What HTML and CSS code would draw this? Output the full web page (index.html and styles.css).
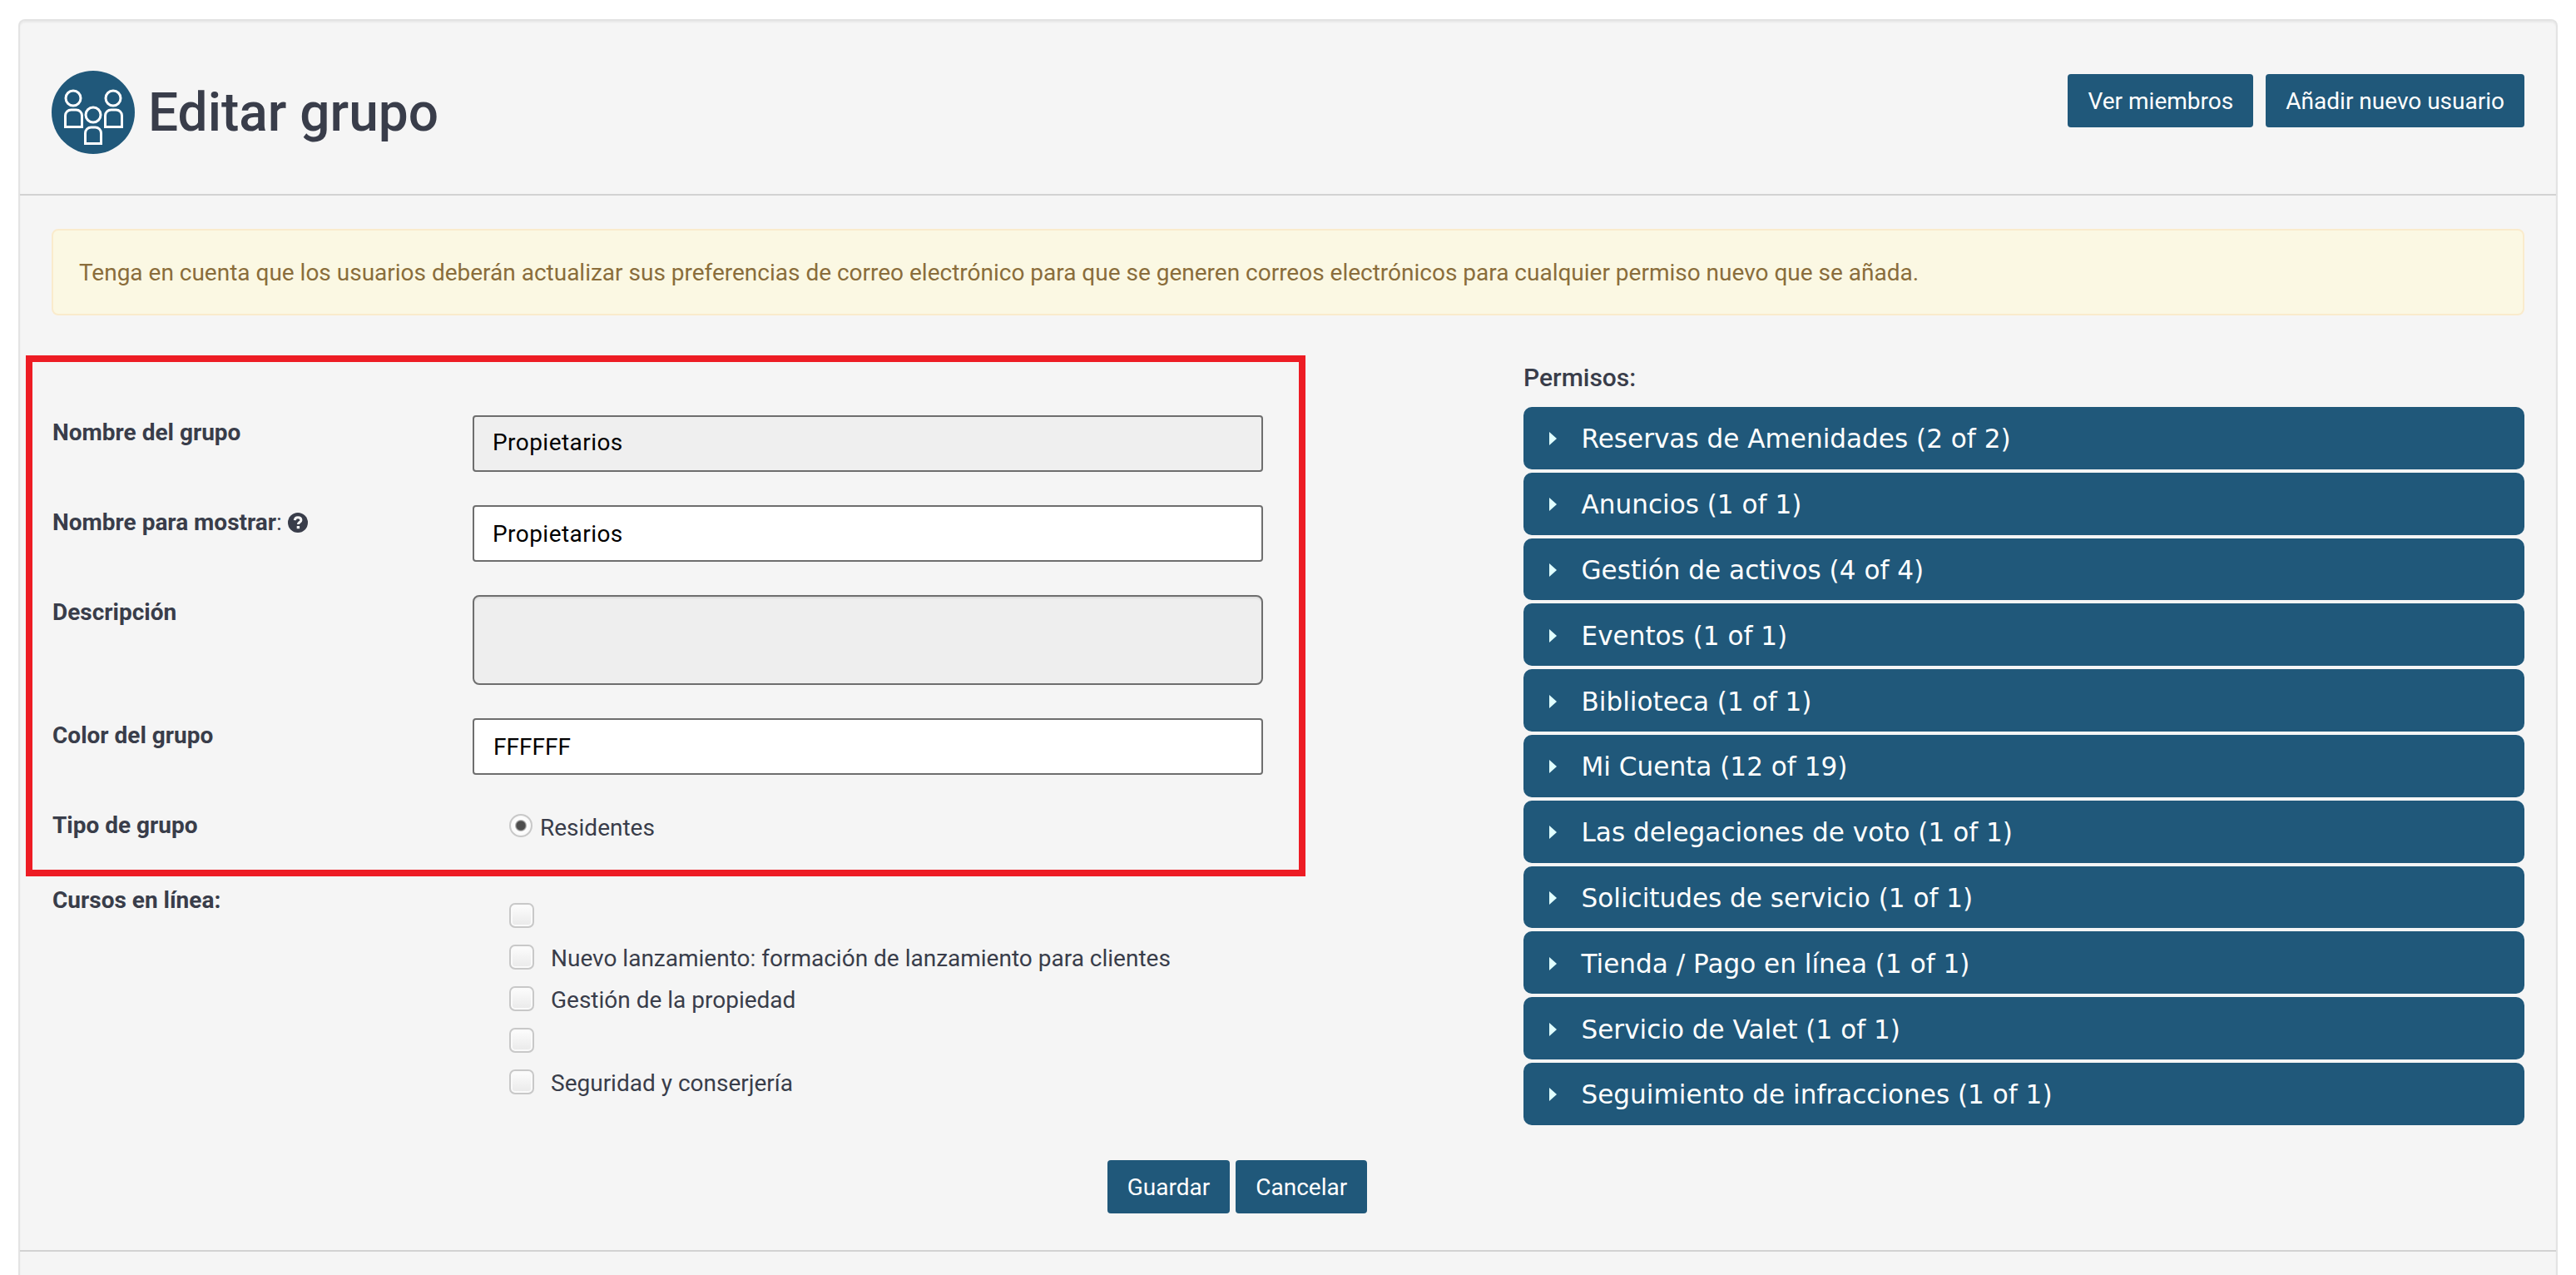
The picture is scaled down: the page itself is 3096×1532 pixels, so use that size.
FILE: index.html
```html
<!DOCTYPE html>
<html lang="es">
<head>
<meta charset="utf-8">
<title>Editar grupo</title>
<link rel="stylesheet" href="styles.css">
</head>
<body>
<main class="panel">
  <header class="panel-header">
    <svg class="group-icon" viewBox="0 0 100 100" fill="none" stroke="#fff" stroke-width="3">
      <circle cx="50" cy="50" r="50" fill="#20587a" stroke="none"/>
      <circle cx="26" cy="33" r="9"/>
      <path d="M16.500 67.500V54a7 7 0 0 1 7-7h6a7 7 0 0 1 7 7v13.500z"/>
      <circle cx="74" cy="33" r="9"/>
      <path d="M64.500 67.500V54a7 7 0 0 1 7-7h6a7 7 0 0 1 7 7v13.500z"/>
      <circle cx="50" cy="53" r="9"/>
      <path d="M40.500 87.500V75a7 7 0 0 1 7-7h5a7 7 0 0 1 7 7v12.500z"/>
    </svg>
    <h1 class="title">Editar grupo</h1>
    <div class="header-actions">
      <button class="btn">Ver miembros</button>
      <button class="btn">Añadir nuevo usuario</button>
    </div>
  </header>
  <div class="notice">Tenga en cuenta que los usuarios deberán actualizar sus preferencias de correo electrónico para que se generen correos electrónicos para cualquier permiso nuevo que se añada.</div>
  <div class="columns">
    <form class="form">
      <section class="highlight">
        <div class="row"><label class="label">Nombre del grupo</label><div class="input disabled">Propietarios</div></div>
        <div class="row"><label class="label">Nombre para mostrar<span class="colon">:</span>
          <svg class="help" viewBox="0 0 24 24"><circle cx="12" cy="12" r="12" fill="#393d4a"/><path d="M8.300 9.200C8.500 6.800 10 5.700 12 5.700c2.200 0 3.900 1.200 3.900 3.200 0 2.700-3.500 2.600-3.500 5.200" fill="none" stroke="#f5f5f5" stroke-width="3"/><path d="M10.700 16h3.400v3.200h-3.400z" fill="#f5f5f5"/></svg></label><div class="input">Propietarios</div></div>
        <div class="row"><label class="label">Descripción</label><div class="input textarea"></div></div>
        <div class="row"><label class="label">Color del grupo</label><div class="input color">FFFFFF</div></div>
        <div class="row"><label class="label">Tipo de grupo</label><div class="option"><span class="radio"></span>Residentes</div></div>
      </section>
      <div class="courses">
        <label class="label">Cursos en línea:</label>
        <div class="checks">
          <div class="check"><span class="box"></span></div>
          <div class="check"><span class="box"></span><span>Nuevo lanzamiento: formación de lanzamiento para clientes</span></div>
          <div class="check"><span class="box"></span><span>Gestión de la propiedad</span></div>
          <div class="check"><span class="box"></span></div>
          <div class="check"><span class="box"></span><span>Seguridad y conserjería</span></div>
        </div>
      </div>
    </form>
    <aside class="permissions">
      <h2 class="subtitle">Permisos:</h2>
      <div class="accordion">
        <div class="item">Reservas de Amenidades (2 of 2)</div>
        <div class="item">Anuncios (1 of 1)</div>
        <div class="item">Gestión de activos (4 of 4)</div>
        <div class="item">Eventos (1 of 1)</div>
        <div class="item">Biblioteca (1 of 1)</div>
        <div class="item">Mi Cuenta (12 of 19)</div>
        <div class="item">Las delegaciones de voto (1 of 1)</div>
        <div class="item">Solicitudes de servicio (1 of 1)</div>
        <div class="item">Tienda / Pago en línea (1 of 1)</div>
        <div class="item">Servicio de Valet (1 of 1)</div>
        <div class="item">Seguimiento de infracciones (1 of 1)</div>
      </div>
    </aside>
  </div>
  <footer class="actions">
    <button class="btn">Guardar</button>
    <button class="btn">Cancelar</button>
  </footer>
</main>
</body>
</html>
```
FILE: styles.css
```css
* { box-sizing: border-box; }
html, body { height: 100%; }
body {
  margin: 0;
  padding: 23px 22px 0;
  background: #fff;
  color: #393d4a;
  font: 28px/40px Roboto, sans-serif;
}
.panel {
  height: 100%;
  border: 2px solid #e3e3e3;
  border-bottom: 0;
  border-radius: 8px 8px 0 0;
  background: #f5f5f5;
  box-shadow: inset 0 2px 2px rgba(0, 0, 0, .05);
}
.panel-header {
  display: flex;
  align-items: flex-start;
  height: 210px;
  padding: 60px 38px 0;
  border-bottom: 2px solid #d2d2d2;
}
.group-icon { width: 100px; height: 100px; }
.title {
  flex: 1;
  margin: 11px 0 0 16px;
  font-size: 64px;
  line-height: 80px;
  font-weight: 500;
}
.header-actions { display: flex; gap: 15px; margin-top: 4px; }
.btn {
  height: 64px;
  padding: 1px 24px 0;
  border: 0;
  border-radius: 4px;
  background: #20587a;
  color: #fff;
  font: 28px/63px Roboto, sans-serif;
}
.header-actions .btn:first-child { width: 223px; }
.notice {
  height: 104px;
  margin: 40px 38px 0;
  padding: 31px 31px;
  border: 2px solid #faebcc;
  border-radius: 8px;
  background: #fbf8e3;
  color: #8a6d3b;
  letter-spacing: -.005px;
}
.columns {
  display: flex;
  justify-content: space-between;
  padding: 48px 38px 0 7px;
}
.form { width: 1538px; }
.highlight {
  display: flex;
  flex-direction: column;
  gap: 40px;
  height: 626px;
  padding: 64px 43px 0 23px;
  border: 8px solid #ed1c24;
}
.row { display: flex; align-items: flex-start; }
.label { width: 506px; padding: 1px 0 0 1px; font-weight: 700; }
.colon { font-weight: 400; }
.help { width: 24px; height: 24px; vertical-align: -3px; }
.input {
  flex: 1;
  height: 68px;
  padding: 13px 22px;
  border: 2px solid #6e6e6e;
  border-radius: 4px;
  background: #fff;
  color: #000;
  letter-spacing: .45px;
}
.color { padding-left: 23px; letter-spacing: 0; }
.disabled { padding-top: 11px; background: #efefef; }
.textarea {
  height: 108px;
  border-radius: 8px;
  background: #eee;
  box-shadow: inset 0 2px 2px rgba(0, 0, 0, .075);
}
.option { display: flex; padding: 4px 0 0 44px; gap: 9px; }
.radio {
  width: 28px;
  height: 28px;
  margin-top: 3px;
  border: 2px solid #c8c8c8;
  border-radius: 50%;
  background: radial-gradient(circle, #4e4e4e 5px, #fff 7.500px, #f0f0f0);
}
.courses { display: flex; padding: 8px 0 0 31px; }
.checks { display: flex; flex-direction: column; gap: 20px; padding: 24px 0 0 44px; }
.check { display: flex; gap: 20px; height: 30px; line-height: 34px; }
.box {
  width: 30px;
  height: 30px;
  border: 2px solid #c8c8c8;
  border-radius: 7px;
  background: linear-gradient(#fdfdfd, #e9e9e9);
  box-shadow: inset 0 0 0 2px #fafafa;
}
.permissions { width: 1203px; padding-top: 7px; }
.subtitle { margin: 0 0 15px; font-size: 30px; line-height: 40px; font-weight: 500; }
.accordion { display: flex; flex-direction: column; gap: 4px; }
.item {
  display: flex;
  align-items: center;
  height: 74.800px;
  padding: 2px 0 0 31px;
  border-radius: 10px;
  background: #20587a;
  color: #fff;
  font: 31.100px/38px "DejaVu Sans", Verdana, sans-serif;
}
.item::before {
  content: "";
  margin-right: 29.500px;
  border: solid transparent;
  border-width: 8px 0 8px 9px;
  border-left-color: #e0ffff;
}
.actions {
  display: flex;
  justify-content: center;
  gap: 7px;
  height: 152.200px;
  padding: 42.200px 122px 0 0;
  border-bottom: 2px solid #d2d2d2;
}
```
